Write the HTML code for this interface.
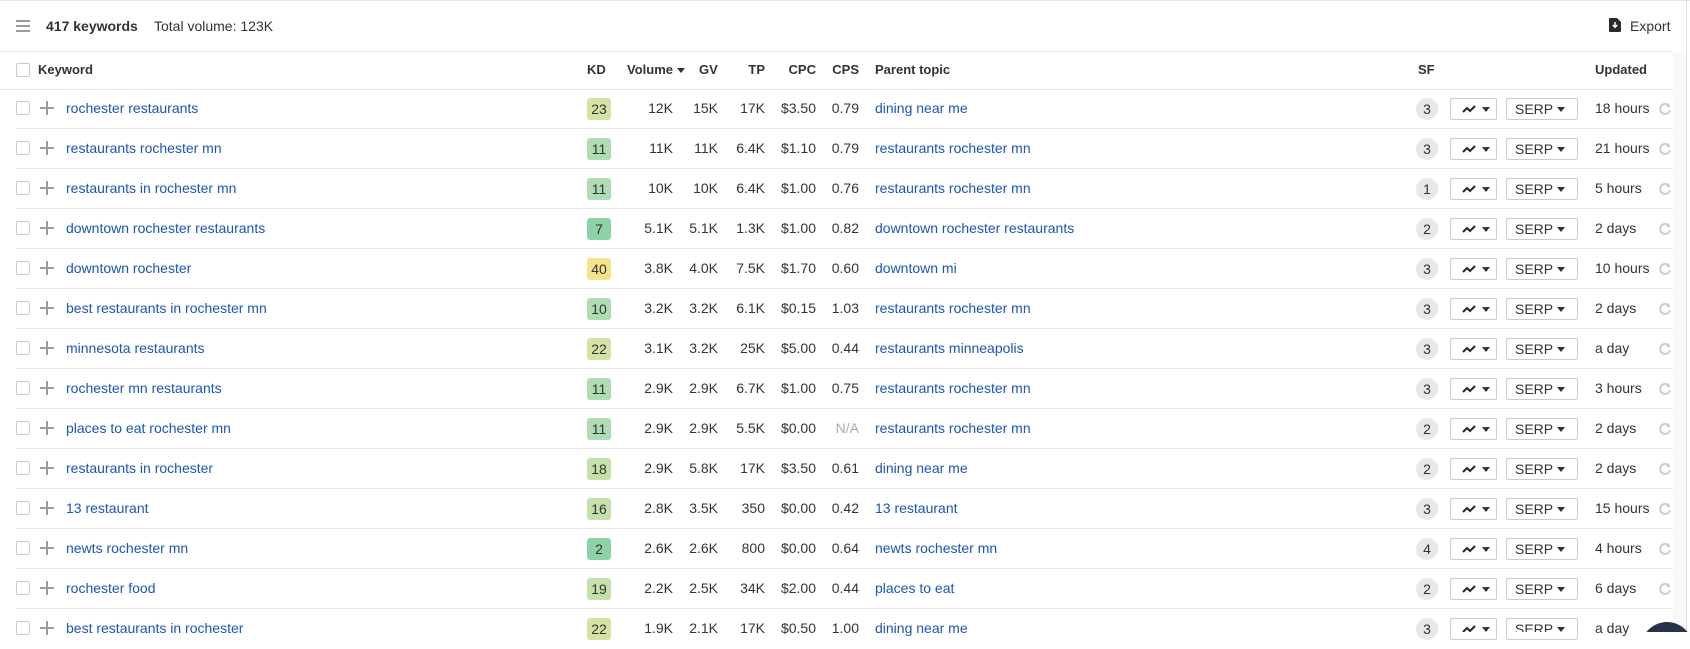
<!DOCTYPE html>
<html><head><meta charset="utf-8"><style>
*{box-sizing:border-box;margin:0;padding:0}
body{width:1690px;height:632px;overflow:hidden;background:#fff;font-family:"Liberation Sans",Arial,sans-serif;font-size:13px;color:#333;position:relative}
.a{position:absolute}
.top{left:0;top:0;width:1690px;height:1px;background:#e6e6e6}
.sb{left:1673px;top:52px;width:14px;height:580px;background:#f8f8f8}
.sbl{left:1686px;top:0;width:1px;height:632px;background:#e2e2e2}
.hl{left:0;width:1673px;height:1px;background:#e4e4e4}
.row{position:absolute;left:0;width:1673px;height:40px;font-size:14px}
.row .d{position:absolute;left:16px;right:0;bottom:0;height:1px;background:#e8e8e8}
.cb{position:absolute;left:16px;width:14px;height:14px;border:1px solid #c9c9c9;border-radius:2px;background:#fff}
.pl{position:absolute;left:40px;width:14px;height:14px}
.pl:before{content:"";position:absolute;left:0;top:6px;width:14px;height:2px;background:#999}
.pl:after{content:"";position:absolute;left:6px;top:0;width:2px;height:14px;background:#999}
.t{position:absolute;white-space:nowrap;line-height:16px}
.kw{left:66px;color:#1a56b5}
.kd{left:587px;width:24px;height:22px;border-radius:3px;text-align:center;line-height:22px;color:#333}
.r{text-align:right}
.pt{left:875px;color:#1a56b5}
.sf{left:1416px;width:22px;height:22px;border-radius:50%;background:#e8e8e8;text-align:center;line-height:22px}
.bt{position:absolute;height:22px;border:1px solid #ccc;border-radius:2px;background:#fff}
.up{left:1595px}
.tri{display:inline-block;width:0;height:0;border-left:4px solid transparent;border-right:4px solid transparent;border-top:5px solid #333;vertical-align:middle}
.hd{font-weight:bold;color:#333}
</style></head><body>
<div class="a top"></div>
<div class="a sb"></div>
<div class="a sbl"></div>
<div class="a" style="left:16px;top:20px;width:14px;height:2px;background:#999"></div>
<div class="a" style="left:16px;top:25px;width:14px;height:2px;background:#999"></div>
<div class="a" style="left:16px;top:30px;width:14px;height:2px;background:#999"></div>
<div class="a t" style="left:46px;top:18px;font-size:14px;font-weight:bold;color:#333">417 keywords</div>
<div class="a t" style="left:154px;top:18px;font-size:14px;color:#333">Total volume: 123K</div>
<svg class="a" style="left:1609px;top:18px" width="12" height="14" viewBox="0 0 12 14"><path d="M1 0h7l4 4v9a1 1 0 0 1-1 1H1a1 1 0 0 1-1-1V1a1 1 0 0 1 1-1z" fill="#2b2b2b"/><path d="M6 4v5M3.8 7l2.2 2.3L8.2 7" stroke="#fff" stroke-width="1.5" fill="none"/></svg>
<div class="a t" style="left:1630px;top:18px;font-size:14px;color:#333">Export</div>
<div class="a hl" style="top:51px"></div>
<div class="cb" style="top:63px"></div>
<div class="a t hd" style="left:38px;top:62px">Keyword</div>
<div class="a t hd" style="left:587px;top:62px">KD</div>
<div class="a t hd" style="left:627px;top:62px">Volume <span class="tri"></span></div>
<div class="a t hd" style="left:699px;top:62px">GV</div>
<div class="a t hd r" style="left:725px;width:40px;top:62px">TP</div>
<div class="a t hd r" style="left:770px;width:46px;top:62px">CPC</div>
<div class="a t hd r" style="left:820px;width:39px;top:62px">CPS</div>
<div class="a t hd" style="left:875px;top:62px">Parent topic</div>
<div class="a t hd" style="left:1418px;top:62px">SF</div>
<div class="a t hd" style="left:1595px;top:62px">Updated</div>
<div class="a hl" style="top:89px;width:1673px"></div>
<div class="row" style="top:89px"><div class="d"></div><div class="cb" style="top:12px"></div><div class="pl" style="top:12px"></div><div class="t kw" style="top:11px">rochester restaurants</div><div class="t kd" style="top:9px;background:#d3e3a3">23</div><div class="t r" style="left:620px;width:53px;top:11px">12K</div><div class="t r" style="left:680px;width:38px;top:11px">15K</div><div class="t r" style="left:725px;width:40px;top:11px">17K</div><div class="t r" style="left:770px;width:46px;top:11px">$3.50</div><div class="t r" style="left:820px;width:39px;top:11px">0.79</div><div class="t pt" style="top:11px">dining near me</div><div class="t sf" style="top:9px">3</div><div class="bt" style="left:1450px;top:9px;width:47px"></div><div class="bt" style="left:1506px;top:9px;width:72px"></div><div class="t up" style="top:11px">18 hours</div></div>
<div class="row" style="top:129px"><div class="d"></div><div class="cb" style="top:12px"></div><div class="pl" style="top:12px"></div><div class="t kw" style="top:11px">restaurants rochester mn</div><div class="t kd" style="top:9px;background:#b0dcb4">11</div><div class="t r" style="left:620px;width:53px;top:11px">11K</div><div class="t r" style="left:680px;width:38px;top:11px">11K</div><div class="t r" style="left:725px;width:40px;top:11px">6.4K</div><div class="t r" style="left:770px;width:46px;top:11px">$1.10</div><div class="t r" style="left:820px;width:39px;top:11px">0.79</div><div class="t pt" style="top:11px">restaurants rochester mn</div><div class="t sf" style="top:9px">3</div><div class="bt" style="left:1450px;top:9px;width:47px"></div><div class="bt" style="left:1506px;top:9px;width:72px"></div><div class="t up" style="top:11px">21 hours</div></div>
<div class="row" style="top:169px"><div class="d"></div><div class="cb" style="top:12px"></div><div class="pl" style="top:12px"></div><div class="t kw" style="top:11px">restaurants in rochester mn</div><div class="t kd" style="top:9px;background:#b0dcb4">11</div><div class="t r" style="left:620px;width:53px;top:11px">10K</div><div class="t r" style="left:680px;width:38px;top:11px">10K</div><div class="t r" style="left:725px;width:40px;top:11px">6.4K</div><div class="t r" style="left:770px;width:46px;top:11px">$1.00</div><div class="t r" style="left:820px;width:39px;top:11px">0.76</div><div class="t pt" style="top:11px">restaurants rochester mn</div><div class="t sf" style="top:9px">1</div><div class="bt" style="left:1450px;top:9px;width:47px"></div><div class="bt" style="left:1506px;top:9px;width:72px"></div><div class="t up" style="top:11px">5 hours</div></div>
<div class="row" style="top:209px"><div class="d"></div><div class="cb" style="top:12px"></div><div class="pl" style="top:12px"></div><div class="t kw" style="top:11px">downtown rochester restaurants</div><div class="t kd" style="top:9px;background:#8ed2a7">7</div><div class="t r" style="left:620px;width:53px;top:11px">5.1K</div><div class="t r" style="left:680px;width:38px;top:11px">5.1K</div><div class="t r" style="left:725px;width:40px;top:11px">1.3K</div><div class="t r" style="left:770px;width:46px;top:11px">$1.00</div><div class="t r" style="left:820px;width:39px;top:11px">0.82</div><div class="t pt" style="top:11px">downtown rochester restaurants</div><div class="t sf" style="top:9px">2</div><div class="bt" style="left:1450px;top:9px;width:47px"></div><div class="bt" style="left:1506px;top:9px;width:72px"></div><div class="t up" style="top:11px">2 days</div></div>
<div class="row" style="top:249px"><div class="d"></div><div class="cb" style="top:12px"></div><div class="pl" style="top:12px"></div><div class="t kw" style="top:11px">downtown rochester</div><div class="t kd" style="top:9px;background:#f5e38c">40</div><div class="t r" style="left:620px;width:53px;top:11px">3.8K</div><div class="t r" style="left:680px;width:38px;top:11px">4.0K</div><div class="t r" style="left:725px;width:40px;top:11px">7.5K</div><div class="t r" style="left:770px;width:46px;top:11px">$1.70</div><div class="t r" style="left:820px;width:39px;top:11px">0.60</div><div class="t pt" style="top:11px">downtown mi</div><div class="t sf" style="top:9px">3</div><div class="bt" style="left:1450px;top:9px;width:47px"></div><div class="bt" style="left:1506px;top:9px;width:72px"></div><div class="t up" style="top:11px">10 hours</div></div>
<div class="row" style="top:289px"><div class="d"></div><div class="cb" style="top:12px"></div><div class="pl" style="top:12px"></div><div class="t kw" style="top:11px">best restaurants in rochester mn</div><div class="t kd" style="top:9px;background:#b0dcb4">10</div><div class="t r" style="left:620px;width:53px;top:11px">3.2K</div><div class="t r" style="left:680px;width:38px;top:11px">3.2K</div><div class="t r" style="left:725px;width:40px;top:11px">6.1K</div><div class="t r" style="left:770px;width:46px;top:11px">$0.15</div><div class="t r" style="left:820px;width:39px;top:11px">1.03</div><div class="t pt" style="top:11px">restaurants rochester mn</div><div class="t sf" style="top:9px">3</div><div class="bt" style="left:1450px;top:9px;width:47px"></div><div class="bt" style="left:1506px;top:9px;width:72px"></div><div class="t up" style="top:11px">2 days</div></div>
<div class="row" style="top:329px"><div class="d"></div><div class="cb" style="top:12px"></div><div class="pl" style="top:12px"></div><div class="t kw" style="top:11px">minnesota restaurants</div><div class="t kd" style="top:9px;background:#d3e3a3">22</div><div class="t r" style="left:620px;width:53px;top:11px">3.1K</div><div class="t r" style="left:680px;width:38px;top:11px">3.2K</div><div class="t r" style="left:725px;width:40px;top:11px">25K</div><div class="t r" style="left:770px;width:46px;top:11px">$5.00</div><div class="t r" style="left:820px;width:39px;top:11px">0.44</div><div class="t pt" style="top:11px">restaurants minneapolis</div><div class="t sf" style="top:9px">3</div><div class="bt" style="left:1450px;top:9px;width:47px"></div><div class="bt" style="left:1506px;top:9px;width:72px"></div><div class="t up" style="top:11px">a day</div></div>
<div class="row" style="top:369px"><div class="d"></div><div class="cb" style="top:12px"></div><div class="pl" style="top:12px"></div><div class="t kw" style="top:11px">rochester mn restaurants</div><div class="t kd" style="top:9px;background:#b0dcb4">11</div><div class="t r" style="left:620px;width:53px;top:11px">2.9K</div><div class="t r" style="left:680px;width:38px;top:11px">2.9K</div><div class="t r" style="left:725px;width:40px;top:11px">6.7K</div><div class="t r" style="left:770px;width:46px;top:11px">$1.00</div><div class="t r" style="left:820px;width:39px;top:11px">0.75</div><div class="t pt" style="top:11px">restaurants rochester mn</div><div class="t sf" style="top:9px">3</div><div class="bt" style="left:1450px;top:9px;width:47px"></div><div class="bt" style="left:1506px;top:9px;width:72px"></div><div class="t up" style="top:11px">3 hours</div></div>
<div class="row" style="top:409px"><div class="d"></div><div class="cb" style="top:12px"></div><div class="pl" style="top:12px"></div><div class="t kw" style="top:11px">places to eat rochester mn</div><div class="t kd" style="top:9px;background:#b0dcb4">11</div><div class="t r" style="left:620px;width:53px;top:11px">2.9K</div><div class="t r" style="left:680px;width:38px;top:11px">2.9K</div><div class="t r" style="left:725px;width:40px;top:11px">5.5K</div><div class="t r" style="left:770px;width:46px;top:11px">$0.00</div><div class="t r" style="left:820px;width:39px;top:11px;color:#aaa">N/A</div><div class="t pt" style="top:11px">restaurants rochester mn</div><div class="t sf" style="top:9px">2</div><div class="bt" style="left:1450px;top:9px;width:47px"></div><div class="bt" style="left:1506px;top:9px;width:72px"></div><div class="t up" style="top:11px">2 days</div></div>
<div class="row" style="top:449px"><div class="d"></div><div class="cb" style="top:12px"></div><div class="pl" style="top:12px"></div><div class="t kw" style="top:11px">restaurants in rochester</div><div class="t kd" style="top:9px;background:#c4e1ab">18</div><div class="t r" style="left:620px;width:53px;top:11px">2.9K</div><div class="t r" style="left:680px;width:38px;top:11px">5.8K</div><div class="t r" style="left:725px;width:40px;top:11px">17K</div><div class="t r" style="left:770px;width:46px;top:11px">$3.50</div><div class="t r" style="left:820px;width:39px;top:11px">0.61</div><div class="t pt" style="top:11px">dining near me</div><div class="t sf" style="top:9px">2</div><div class="bt" style="left:1450px;top:9px;width:47px"></div><div class="bt" style="left:1506px;top:9px;width:72px"></div><div class="t up" style="top:11px">2 days</div></div>
<div class="row" style="top:489px"><div class="d"></div><div class="cb" style="top:12px"></div><div class="pl" style="top:12px"></div><div class="t kw" style="top:11px">13 restaurant</div><div class="t kd" style="top:9px;background:#c4e1ab">16</div><div class="t r" style="left:620px;width:53px;top:11px">2.8K</div><div class="t r" style="left:680px;width:38px;top:11px">3.5K</div><div class="t r" style="left:725px;width:40px;top:11px">350</div><div class="t r" style="left:770px;width:46px;top:11px">$0.00</div><div class="t r" style="left:820px;width:39px;top:11px">0.42</div><div class="t pt" style="top:11px">13 restaurant</div><div class="t sf" style="top:9px">3</div><div class="bt" style="left:1450px;top:9px;width:47px"></div><div class="bt" style="left:1506px;top:9px;width:72px"></div><div class="t up" style="top:11px">15 hours</div></div>
<div class="row" style="top:529px"><div class="d"></div><div class="cb" style="top:12px"></div><div class="pl" style="top:12px"></div><div class="t kw" style="top:11px">newts rochester mn</div><div class="t kd" style="top:9px;background:#8ed2a7">2</div><div class="t r" style="left:620px;width:53px;top:11px">2.6K</div><div class="t r" style="left:680px;width:38px;top:11px">2.6K</div><div class="t r" style="left:725px;width:40px;top:11px">800</div><div class="t r" style="left:770px;width:46px;top:11px">$0.00</div><div class="t r" style="left:820px;width:39px;top:11px">0.64</div><div class="t pt" style="top:11px">newts rochester mn</div><div class="t sf" style="top:9px">4</div><div class="bt" style="left:1450px;top:9px;width:47px"></div><div class="bt" style="left:1506px;top:9px;width:72px"></div><div class="t up" style="top:11px">4 hours</div></div>
<div class="row" style="top:569px"><div class="d"></div><div class="cb" style="top:12px"></div><div class="pl" style="top:12px"></div><div class="t kw" style="top:11px">rochester food</div><div class="t kd" style="top:9px;background:#c4e1ab">19</div><div class="t r" style="left:620px;width:53px;top:11px">2.2K</div><div class="t r" style="left:680px;width:38px;top:11px">2.5K</div><div class="t r" style="left:725px;width:40px;top:11px">34K</div><div class="t r" style="left:770px;width:46px;top:11px">$2.00</div><div class="t r" style="left:820px;width:39px;top:11px">0.44</div><div class="t pt" style="top:11px">places to eat</div><div class="t sf" style="top:9px">2</div><div class="bt" style="left:1450px;top:9px;width:47px"></div><div class="bt" style="left:1506px;top:9px;width:72px"></div><div class="t up" style="top:11px">6 days</div></div>
<div class="row" style="top:609px"><div class="cb" style="top:12px"></div><div class="pl" style="top:12px"></div><div class="t kw" style="top:11px">best restaurants in rochester</div><div class="t kd" style="top:9px;background:#d3e3a3">22</div><div class="t r" style="left:620px;width:53px;top:11px">1.9K</div><div class="t r" style="left:680px;width:38px;top:11px">2.1K</div><div class="t r" style="left:725px;width:40px;top:11px">17K</div><div class="t r" style="left:770px;width:46px;top:11px">$0.50</div><div class="t r" style="left:820px;width:39px;top:11px">1.00</div><div class="t pt" style="top:11px">dining near me</div><div class="t sf" style="top:9px">3</div><div class="bt" style="left:1450px;top:9px;width:47px"></div><div class="bt" style="left:1506px;top:9px;width:72px"></div><div class="t up" style="top:11px">a day</div></div>
<svg class="a" style="left:0;top:0" width="1690" height="632">
<defs>
<g id="btn">
<path d="M1463 125l4-4 3 3 5-5" stroke="#222" stroke-width="2" fill="none"/>
<path d="M1482 120h8l-4 5z" fill="#333"/>
<text x="1515" y="127" font-family="Liberation Sans, Arial, sans-serif" font-size="14" fill="#333">SERP</text>
<path d="M1557 120h8l-4 5z" fill="#333"/>
<path d="M1669.5 119.5A5 5 0 1 0 1670 123" stroke="#c4c4c4" stroke-width="1.6" fill="none"/>
<path d="M1667 116.5l3.5 2.8-3.8 1.2z" fill="#c4c4c4"/>
</g>
</defs>
<use href="#btn" y="-13"/><use href="#btn" y="27"/><use href="#btn" y="67"/><use href="#btn" y="107"/><use href="#btn" y="147"/><use href="#btn" y="187"/><use href="#btn" y="227"/><use href="#btn" y="267"/><use href="#btn" y="307"/><use href="#btn" y="347"/><use href="#btn" y="387"/><use href="#btn" y="427"/><use href="#btn" y="467"/><use href="#btn" y="507"/>
<circle cx="1667" cy="648" r="26" fill="#26334a"/>
</svg>
</body></html>
